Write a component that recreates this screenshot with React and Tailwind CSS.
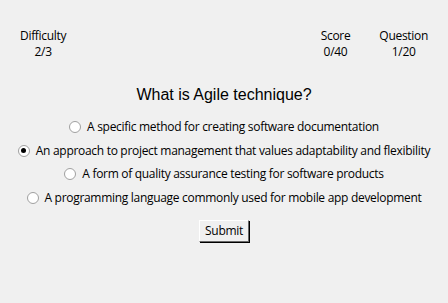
import React, { useState } from 'react';

const options = [
  'A specific method for creating software documentation',
  'An approach to project management that values adaptability and flexibility',
  'A form of quality assurance testing for software products',
  'A programming language commonly used for mobile app development',
];

const Stat = ({ label, value, className = '' }) => (
  <div className={`flex flex-col items-center leading-[16px] ${className}`}>
    <span>{label}</span>
    <span>{value}</span>
  </div>
);

const Radio = ({ checked }) => (
  <span className="w-[12px] h-[12px] rounded-full border border-[#a0a0a0] bg-white flex items-center justify-center shrink-0">
    {checked && <span className="w-[5px] h-[5px] rounded-full bg-black"></span>}
  </span>
);

export default function App() {
  const [selected, setSelected] = useState(1);

  return (
    <div className="w-[448px] h-[303px] bg-[#f0f0f0] text-black text-[12px] tracking-[-0.3px] font-['Open_Sans','Noto_Sans',sans-serif]">
      <div className="flex items-start pt-[28px] px-[20px]">
        <Stat label="Difficulty" value="2/3" />
        <div className="flex-1"></div>
        <Stat label="Score" value="0/40" />
        <Stat label="Question" value="1/20" className="ml-[29px]" />
      </div>

      <h1 className="mt-[24px] text-center text-[16px] leading-[22px] tracking-normal font-['Liberation_Sans',Arial,sans-serif]">
        What is Agile technique?
      </h1>

      <div className="mt-[9px] flex flex-col items-center">
        {options.map((opt, i) => (
          <label
            key={i}
            onClick={() => setSelected(i)}
            className="h-[23.7px] flex items-center gap-[6px] cursor-default"
          >
            <Radio checked={selected === i} />
            <span>{opt}</span>
          </label>
        ))}
      </div>

      <div className="mt-[10px] flex justify-center">
        <button className="h-[22px] px-[5px] bg-[#f0f0f0] border border-t-white border-l-white border-r-[#696969] border-b-[#696969] shadow-[1px_1px_0_#000]">
          Submit
        </button>
      </div>
    </div>
  );
}
